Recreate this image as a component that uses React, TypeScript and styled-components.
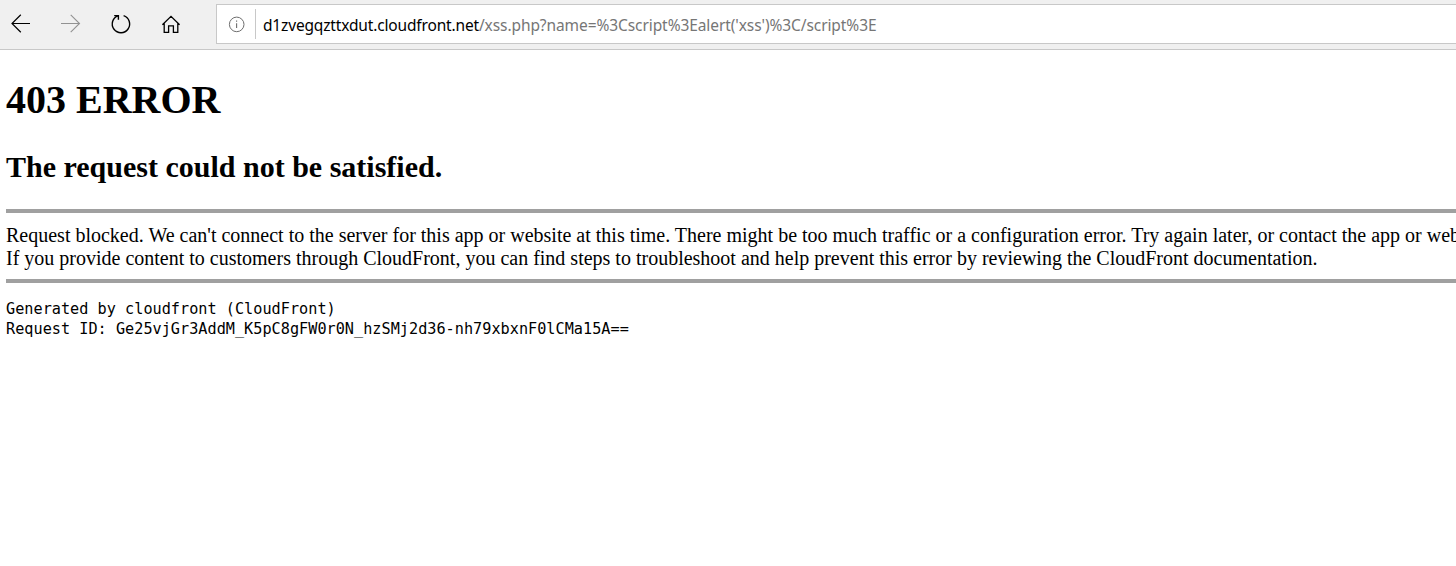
import React from "react";
import styled, { createGlobalStyle } from "styled-components";

const GlobalStyle = createGlobalStyle`
  html, body { margin: 0; padding: 0; background: #fff; }
  body { overflow: hidden; }
`;

const Window = styled.div`
  display: flex;
  flex-direction: column;
  height: 566px;
  overflow: hidden;
  background: #fff;
`;

const Toolbar = styled.header`
  display: flex;
  box-sizing: border-box;
  height: 50px;
  flex: none;
  background: #f0f0f0;
  border-bottom: 1px solid #c8c8c8;
`;

const NavButtons = styled.nav`
  display: flex;
  width: 216px;
  flex: none;
`;

const NavButton = styled.button<{ $disabled?: boolean }>`
  width: 50px;
  height: 49px;
  padding: 0;
  border: 0;
  background: none;
  color: ${(p) => (p.$disabled ? "#929292" : "#000")};
`;

const Icon = styled.svg`
  display: block;
  fill: none;
  stroke: currentColor;
`;

const AddressBar = styled.div`
  display: flex;
  align-items: center;
  box-sizing: border-box;
  flex: 1;
  height: 40px;
  margin-top: 4px;
  background: #fff;
  border: 1px solid #c8c8c8;
  border-right: 0;
`;

const SiteInfo = styled.div`
  width: 38px;
  height: 38px;
  color: #6e6e6e;
`;

const Separator = styled.div`
  width: 1px;
  height: 30px;
  background: #c8c8c8;
`;

const Url = styled.div`
  display: flex;
  margin: 2px 0 0 7px;
  font: 15.5px/22px "Noto Sans", "Open Sans", sans-serif;
  white-space: nowrap;
`;

const UrlPart = styled.span<{ $color: string; $tracking: string }>`
  color: ${(p) => p.$color};
  letter-spacing: ${(p) => p.$tracking};
`;

const Page = styled.main`
  padding-left: 6px;
  color: #000;
  font: 20px/23px "Liberation Serif", serif;
  white-space: nowrap;
`;

const Title = styled.h1`
  margin: 27px 0 0;
  font-size: 40px;
  line-height: 46px;
`;

const Subtitle = styled.h2`
  margin: 27px 0 0;
  font-size: 30px;
  line-height: 34px;
`;

const Rule = styled.div<{ $top: number }>`
  height: 4px;
  margin-top: ${(p) => p.$top}px;
  background: #a0a0a0;
`;

const Message = styled.p`
  margin: 11px 0 0;
`;

const Details = styled.pre`
  margin: 16px 0 0;
  font: 15.2px/20px "DejaVu Sans Mono", monospace;
  letter-spacing: 0.015px;
`;

export default function App() {
  return (
    <Window>
      <GlobalStyle />
      <Toolbar>
        <NavButtons>
          <NavButton aria-label="Back">
            <Icon width="50" height="49">
              <path d="M30 23.5H12M20.8 14.8L12 23.5L20.8 32.2" strokeWidth="1.2" />
            </Icon>
          </NavButton>
          <NavButton aria-label="Forward" $disabled>
            <Icon width="50" height="49">
              <path d="M11 23.5H29.5M20.7 14.8L29.5 23.5L20.7 32.2" strokeWidth="1.1" />
            </Icon>
          </NavButton>
          <NavButton aria-label="Refresh">
            <Icon width="50" height="49">
              <path d="M23.6 15.7A8.7 8.7 0 1 1 18 15.8M14.2 15.6H18.4V19.8" strokeWidth="1.4" />
            </Icon>
          </NavButton>
          <NavButton aria-label="Home">
            <Icon width="50" height="49">
              <path d="M12.4 24.8L21 16.4L29.6 24.8M14.2 23V32.3H18.6V25.8H23.4V32.3H27.8V23" strokeWidth="1.3" />
            </Icon>
          </NavButton>
        </NavButtons>
        <AddressBar>
          <SiteInfo>
            <Icon width="38" height="38">
              <circle cx="19.7" cy="19.4" r="7.3" />
              <path d="M19.6 18.3V23M19.6 15.5V16.8" strokeWidth="1.1" />
            </Icon>
          </SiteInfo>
          <Separator />
          <Url>
            <UrlPart $color="#000" $tracking="-0.16px">d1zvegqzttxdut.cloudfront.net</UrlPart>
            <UrlPart $color="#767676" $tracking="-0.085px">/xss.php?name=%3Cscript%3Ealert('xss')%3C/script%3E</UrlPart>
          </Url>
        </AddressBar>
      </Toolbar>
      <Page>
        <Title>403 ERROR</Title>
        <Subtitle>The request could not be satisfied.</Subtitle>
        <Rule $top={25} />
        <Message>
          Request blocked. We can't connect to the server for this app or website at this time. There might be too much traffic or a configuration error. Try again later, or contact the app or website owner.
          <br />
          If you provide content to customers through CloudFront, you can find steps to troubleshoot and help prevent this error by reviewing the CloudFront documentation.
        </Message>
        <Rule $top={9} />
        <Details>{"Generated by cloudfront (CloudFront)\nRequest ID: Ge25vjGr3AddM_K5pC8gFW0r0N_hzSMj2d36-nh79xbxnF0lCMa15A=="}</Details>
      </Page>
    </Window>
  );
}
